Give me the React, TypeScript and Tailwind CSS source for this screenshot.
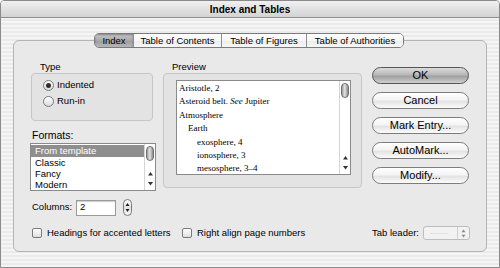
import React from 'react';

const stripes =
  'bg-[repeating-linear-gradient(to_bottom,#f5f5f5_0px,#f5f5f5_2px,#eaeaea_2px,#eaeaea_4px)]';

function Tab({ label, active, w, last }: { label: string; active?: boolean; w: string; last?: boolean }) {
  return (
    <div
      className={`${w} h-full flex items-center justify-center ${last ? '' : 'border-r border-[#8f8f8f]'} ${
        active
          ? 'bg-[linear-gradient(to_bottom,#c9c9c9_0%,#a9a9a9_50%,#9c9c9c_51%,#b8b8b8_100%)] shadow-[inset_0_1px_2px_rgba(0,0,0,0.35)]'
          : 'bg-[linear-gradient(to_bottom,#ffffff_0%,#f6f6f6_50%,#ebebeb_51%,#f7f7f7_100%)]'
      }`}
    >
      {label}
    </div>
  );
}

function AquaButton({ label, primary }: { label: string; primary?: boolean }) {
  return (
    <div
      className={`h-[17px] w-[97px] rounded-full border flex items-center justify-center text-[11px] leading-none ${
        primary
          ? 'border-[#555] bg-[linear-gradient(to_bottom,#dcdcdc_0%,#b8b8b8_45%,#a0a0a0_55%,#d0d0d0_100%)]'
          : 'border-[#7d7d7d] bg-[linear-gradient(to_bottom,#ffffff_0%,#f4f4f4_45%,#e3e3e3_55%,#fbfbfb_100%)]'
      }`}
    >
      {label}
    </div>
  );
}

function Radio({ checked }: { checked?: boolean }) {
  return (
    <div className="w-[11px] h-[11px] rounded-full border border-[#7a7a7a] bg-[linear-gradient(to_bottom,#ffffff,#dcdcdc)] flex items-center justify-center">
      {checked && <div className="w-[5px] h-[5px] rounded-full bg-[#2e2e2e]" />}
    </div>
  );
}

function Checkbox() {
  return (
    <div className="w-[10px] h-[10px] rounded-[2px] border border-[#7a7a7a] bg-[linear-gradient(to_bottom,#ffffff,#dedede)]" />
  );
}

function ScrollBar({ h }: { h: string }) {
  return (
    <div className={`w-[11px] ${h} border-l border-[#d4d4d4] bg-white flex flex-col items-center`}>
      <div className="mt-[2px] w-[8px] h-[15px] rounded-full border border-[#6f6f6f] bg-[linear-gradient(to_right,#9a9a9a,#e4e4e4_45%,#8a8a8a)]" />
      <div className="flex-1" />
      <svg width="7" height="20" viewBox="0 0 7 20" className="mb-[1px]">
        <path d="M3.5 3 L6 6.5 L1 6.5 Z" fill="#333" />
        <path d="M3.5 16.5 L6 13 L1 13 Z" fill="#333" />
      </svg>
    </div>
  );
}

export default function App() {
  return (
    <div
      className={`w-[500px] h-[268px] overflow-hidden flex flex-col border border-[#8a8a8a] rounded-t-[4px] ${stripes} font-['Liberation_Sans',Arial,sans-serif] text-black text-[9.5px]`}
    >
      {/* Title bar */}
      <div className="h-[17px] shrink-0 flex items-center justify-center bg-[linear-gradient(to_bottom,#f0f0f0,#d3d3d3)] border-b border-[#8c8c8c] text-[10px] font-bold">
        Index and Tables
      </div>

      <div className="flex-1 px-[12px] pt-[15px]">
        {/* Tabs */}
        <div className="relative z-10 flex justify-center pr-[2px]">
          <div className="flex h-[15px] rounded-[5px] border border-[#7b7b7b] overflow-hidden leading-none">
            <Tab label="Index" active w="w-[39px]" />
            <Tab label="Table of Contents" w="w-[88px]" />
            <Tab label="Table of Figures" w="w-[85px]" />
            <Tab label="Table of Authorities" w="w-[96px]" last />
          </div>
        </div>

        {/* Panel */}
        <div className="-mt-[8px] h-[212px] rounded-[6px] border border-[#b4b4b4] bg-[#e9e9e9] pl-[16px] pt-[20px]">
          <div className="flex h-[156px]">
            {/* Left column */}
            <div className="w-[126px] flex flex-col">
              <div className="h-[12px] leading-[12px] pl-[10px]">Type</div>
              <div className="ml-[1px] w-[122px] h-[48px] rounded-[4px] border border-[#c6c6c6] bg-[#e3e3e3] pt-[3px] pl-[11px]">
                <div className="h-[16px] flex items-center gap-[3px]">
                  <Radio checked />
                  <span>Indented</span>
                </div>
                <div className="h-[16px] flex items-center gap-[3px]">
                  <Radio />
                  <span>Run-in</span>
                </div>
              </div>
              <div className="mt-[8px] h-[12px] leading-[12px] pl-[2px] text-[10.5px]">Formats:</div>
              <div className="mt-[2px] w-[126px] h-[48px] border border-[#8a8a8a] bg-white flex">
                <div className="flex-1 leading-none pt-[1px]">
                  <div className="h-[12px] flex items-center pl-[4px] bg-[#8e8e8e] text-white">From template</div>
                  <div className="h-[11px] flex items-center pl-[4px]">Classic</div>
                  <div className="h-[11px] flex items-center pl-[4px]">Fancy</div>
                  <div className="h-[11px] flex items-center pl-[4px]">Modern</div>
                </div>
                <ScrollBar h="h-full" />
              </div>
              <div className="mt-[8px] flex items-center h-[17px]">
                <span className="pl-[2px] w-[46px]">Columns:</span>
                <div className="w-[40px] h-[16px] border border-[#9a9a9a] bg-white shadow-[inset_0_1px_1px_rgba(0,0,0,0.2)] pl-[3px] flex items-center">
                  2
                </div>
                <div className="ml-[7px] w-[9px] h-[17px] rounded-full border border-[#7a7a7a] bg-[linear-gradient(to_bottom,#ffffff,#e2e2e2_50%,#f6f6f6)] flex items-center justify-center">
                  <svg width="5" height="11" viewBox="0 0 5 11">
                    <path d="M2.5 1 L4.5 4 L0.5 4 Z" fill="#222" />
                    <path d="M2.5 10 L4.5 7 L0.5 7 Z" fill="#222" />
                  </svg>
                </div>
              </div>
            </div>

            {/* Preview column */}
            <div className="ml-[7px] w-[199px] flex flex-col">
              <div className="h-[12px] leading-[12px] pl-[9px]">Preview</div>
              <div className="w-[199px] h-[115px] rounded-[4px] border border-[#c6c6c6] bg-[#e3e3e3] pl-[12px] pt-[6px]">
                <div className="w-[175px] h-[95px] border border-[#8a8a8a] bg-white flex">
                  <div className="flex-1 pt-[1px] pl-[2px] font-['Liberation_Serif','Times_New_Roman',serif] text-[9px] leading-[13.4px]">
                    <div>Aristotle, 2</div>
                    <div>
                      Asteroid belt. <i>See</i> Jupiter
                    </div>
                    <div>Atmosphere</div>
                    <div className="pl-[9px]">Earth</div>
                    <div className="pl-[18px]">exosphere, 4</div>
                    <div className="pl-[18px]">ionosphere, 3</div>
                    <div className="pl-[18px]">mesosphere, 3–4</div>
                  </div>
                  <ScrollBar h="h-full" />
                </div>
              </div>
            </div>

            {/* Buttons column */}
            <div className="ml-[10px] pt-[6px] flex flex-col gap-[8px]">
              <AquaButton label="OK" primary />
              <AquaButton label="Cancel" />
              <AquaButton label="Mark Entry..." />
              <AquaButton label="AutoMark..." />
              <AquaButton label="Modify..." />
            </div>
          </div>

          {/* Bottom row */}
          <div className="mt-[8px] flex items-center h-[16px]">
            <div className="w-[152px] pl-[2px] flex items-center gap-[5px]">
              <Checkbox />
              <span>Headings for accented letters</span>
            </div>
            <div className="w-[190px] flex items-center gap-[5px]">
              <Checkbox />
              <span>Right align page numbers</span>
            </div>
            <span className="w-[51px]">Tab leader:</span>
            <div className="w-[47px] h-[14px] rounded-[3px] border border-[#bdbdbd] bg-[#f2f2f2] flex items-center">
              <div className="flex-1 pl-[6px] text-[#cfcfcf] text-[8px] leading-none">-------</div>
              <div className="w-[12px] h-full border-l border-[#d0d0d0] flex items-center justify-center">
                <svg width="5" height="9" viewBox="0 0 5 9">
                  <path d="M2.5 0.5 L4.5 3.2 L0.5 3.2 Z" fill="#8a8a8a" />
                  <path d="M2.5 8.5 L4.5 5.8 L0.5 5.8 Z" fill="#8a8a8a" />
                </svg>
              </div>
            </div>
          </div>
        </div>
      </div>
    </div>
  );
}
